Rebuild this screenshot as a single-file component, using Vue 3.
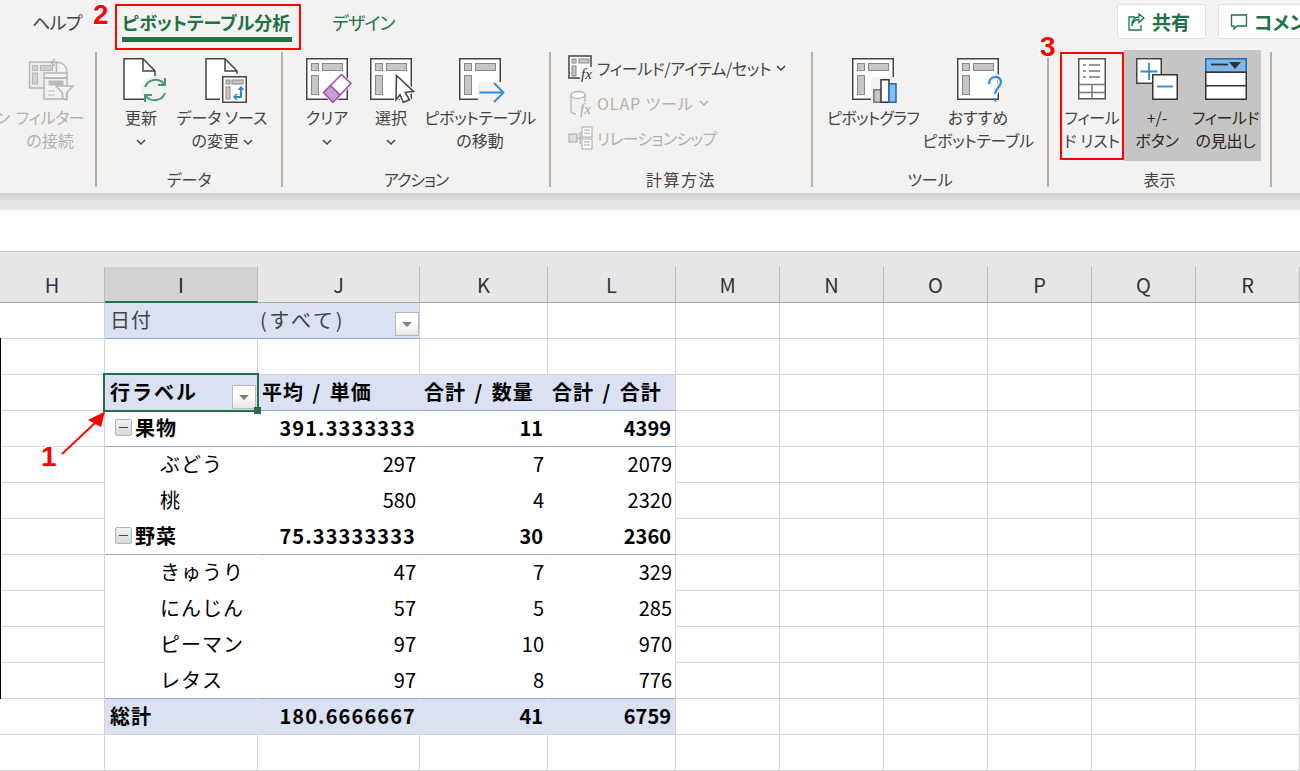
<script setup>
const cols = ['H', 'I', 'J', 'K', 'L', 'M', 'N', 'O', 'P', 'Q', 'R']
const blanks = [1, 2, 3, 4, 5, 6]
const rows = [
  { kind: 'page', a: '日付', b: '(すべて)', c: '', d: '' },
  { kind: 'blank', edge: true, a: '', b: '', c: '', d: '' },
  { kind: 'head', edge: true, a: '行ラベル', b: '平均 / 単価', c: '合計 / 数量', d: '合計 / 合計' },
  { kind: 'group', edge: true, a: '果物', b: '391.3333333', c: '11', d: '4399' },
  { kind: 'item', edge: true, a: 'ぶどう', b: '297', c: '7', d: '2079' },
  { kind: 'item', edge: true, a: '桃', b: '580', c: '4', d: '2320' },
  { kind: 'group', edge: true, a: '野菜', b: '75.33333333', c: '30', d: '2360' },
  { kind: 'item', edge: true, a: 'きゅうり', b: '47', c: '7', d: '329' },
  { kind: 'item', edge: true, a: 'にんじん', b: '57', c: '5', d: '285' },
  { kind: 'item', edge: true, a: 'ピーマン', b: '97', c: '10', d: '970' },
  { kind: 'item last', edge: true, a: 'レタス', b: '97', c: '8', d: '776' },
  { kind: 'total', a: '総計', b: '180.6666667', c: '41', d: '6759' },
  { kind: 'blank', a: '', b: '', c: '', d: '' }
]
</script>

<template>
  <div class="page">
    <svg class="defs" width="0" height="0">
      <symbol id="pv" viewBox="0 0 42 42" overflow="visible">
        <rect x=".75" y=".75" width="40.5" height="40.5" fill="#fff" stroke="#444" stroke-width="1.5" />
        <g fill="#c8c6c4" stroke="#8a8886">
          <rect x="5.5" y="5.5" width="7" height="7" />
          <rect x="16.5" y="5.5" width="20" height="7" />
          <rect x="5.5" y="17.5" width="7" height="19" />
        </g>
      </symbol>
    </svg>

    <header class="ribbon">
      <div class="tabs">
        <span class="tab help">ヘルプ</span>
        <span class="tab active">ピボットテーブル分析<i class="redbox tabbox"></i></span>
        <span class="tab design">デザイン</span>
        <div class="spacer"></div>
        <button class="btn share">
          <svg width="18" height="18" viewBox="0 0 18 18" fill="none" stroke="#217346" stroke-width="1.3">
            <path d="M8 4H2v13h12v-5" />
            <path d="M5 13c.5-4 3-6.500 7-6.500V9.500L17 5 12 1v3C7 4 4.500 8 5 13z" />
          </svg>
          共有
        </button>
        <button class="btn comment">
          <svg width="18" height="18" viewBox="0 0 18 18" fill="none" stroke="#217346" stroke-width="1.300">
            <path d="M1.500 2h15v11H7l-3 3v-3H1.500z" />
          </svg>
          コメント
        </button>
      </div>

      <div class="groups">
        <section class="group g1">
          <div class="items">
            <div class="cut off">ン</div>
            <div class="item off w80">
              <svg class="ico" viewBox="-2 -1 46 46" fill="none" stroke="#b9b7b5">
                <rect x=".5" y="4" width="27" height="26" fill="#ecebe9" stroke-width="1.500" />
                <rect x="3.500" y="7.500" width="5" height="5" fill="#d2d0ce" />
                <rect x="3.500" y="15" width="5" height="11" fill="#d2d0ce" />
                <rect x="11.500" y="7.500" width="12" height="5" fill="#d2d0ce" />
                <path d="M26 1l-4 3.500L26 8" stroke-width="1.500" />
                <path d="M22 4.500h7a9 9 0 0 1 9 9v3" stroke-width="1.300" />
                <rect x="15" y="15" width="23" height="26" fill="#f3f2f1" stroke-width="1.500" />
                <path d="M15 20h23" stroke-width="2" />
                <rect x="20" y="23" width="14" height="4" fill="#bbb" />
                <path d="M19 33h7M19 37h7" />
                <path d="M27 28h17l-6.500 7v7l-4-2v-5z" fill="#f3f2f1" stroke-width="1.500" />
              </svg>
              <div class="lbl tight">フィルター</div>
              <div class="lbl">の接続</div>
            </div>
          </div>
          <div class="glabel"></div>
        </section>

        <section class="group g2">
          <div class="items">
            <div class="item w60">
              <svg class="ico" viewBox="-2 -1 46 46" fill="none">
                <path d="M4 .75h19L35 13v28.250H4z" fill="#fff" stroke="#444" stroke-width="1.500" />
                <path d="M23 .75V13h12" stroke="#444" stroke-width="1.500" />
                <circle cx="35" cy="32" r="14" fill="#f3f2f1" />
                <path d="M25 29a11 11 0 0 1 19-3M45 35a11 11 0 0 1-19 3" stroke="#3f9c6b" stroke-width="2" />
                <path d="M45 20v7h-7M25 44v-7h7" stroke="#3f9c6b" stroke-width="2" />
              </svg>
              <div class="lbl">更新</div>
              <div class="lbl"><svg class="chev" viewBox="0 0 10 6"><path d="M1 1l4 4 4-4" /></svg></div>
            </div>
            <div class="item w102">
              <svg class="ico" viewBox="-2 -1 46 46" fill="none">
                <path d="M5 .75h19L36 13v28.250H5z" fill="#fff" stroke="#444" stroke-width="1.500" />
                <path d="M24 .75V13h12" stroke="#444" stroke-width="1.500" />
                <rect x="19" y="16" width="28" height="30" fill="#f3f2f1" />
                <rect x="21.750" y="18.750" width="23.500" height="25.500" fill="#fff" stroke="#444" stroke-width="1.500" />
                <g fill="#c8c6c4" stroke="#8a8886">
                  <rect x="25" y="22" width="4" height="4" />
                  <rect x="31" y="22" width="11" height="4" />
                  <rect x="25" y="29" width="4" height="12" />
                </g>
                <path d="M40 29v10h-7" stroke="#2e8bd8" stroke-width="2" />
                <path d="M37.500 32l2.500-3 2.500 3M36 36l-3 3 3 3" stroke="#2e8bd8" stroke-width="1.500" />
              </svg>
              <div class="lbl">データ ソース</div>
              <div class="lbl">の変更 <svg class="chev" viewBox="0 0 10 6"><path d="M1 1l4 4 4-4" /></svg></div>
            </div>
          </div>
          <div class="glabel">データ</div>
        </section>

        <section class="group g3">
          <div class="items">
            <div class="item w64">
              <svg class="ico" viewBox="-2 -1 46 46" fill="none">
                <use href="#pv" x="0" y="0" width="42" height="42" />
                <path d="M35.500 16.500L45 25.500 27 44.500 17.500 34.500z" fill="#f3f2f1" stroke="#f3f2f1" stroke-width="3" />
                <path d="M35.500 16.500L45 25.500 34 37 24.500 27.500z" fill="#fff" />
                <path d="M24.500 27.500L34 37 27 44.500 17.500 34.500z" fill="#c99fd2" />
                <path d="M35.500 16.500L45 25.500 27 44.500 17.500 34.500zM24.500 27.500L34 37" stroke="#a349a4" stroke-width="1.500" />
              </svg>
              <div class="lbl">クリア</div>
              <div class="lbl"><svg class="chev" viewBox="0 0 10 6"><path d="M1 1l4 4 4-4" /></svg></div>
            </div>
            <div class="item w64">
              <svg class="ico" viewBox="-2 -1 46 46" fill="none">
                <use href="#pv" x="0" y="0" width="42" height="42" />
                <path d="M26.500 17.500L43.500 33.500 35.200 34.300 39.500 41.800 33.300 44.300 30 36.700 26 41.700z" fill="#fff" stroke="#f3f2f1" stroke-width="4" />
                <path d="M26.500 17.500L43.500 33.500 35.200 34.300 39.500 41.800 33.300 44.300 30 36.700 26 41.700z" fill="#fff" stroke="#444" stroke-width="1.500" />
              </svg>
              <div class="lbl">選択</div>
              <div class="lbl"><svg class="chev" viewBox="0 0 10 6"><path d="M1 1l4 4 4-4" /></svg></div>
            </div>
            <div class="item w114">
              <svg class="ico" viewBox="-2 -1 46 46" fill="none">
                <use href="#pv" x="0" y="0" width="42" height="42" />
                <rect x="19" y="24" width="27" height="21" fill="#f3f2f1" />
                <path d="M20.500 34.500H44.500M35 25l9.500 9.500L35 44" stroke="#2e8bd8" stroke-width="1.800" />
              </svg>
              <div class="lbl tight">ピボットテーブル</div>
              <div class="lbl">の移動</div>
            </div>
          </div>
          <div class="glabel action">アクション</div>
        </section>

        <section class="group g4">
          <div class="items list">
            <div class="line">
              <svg class="sm" viewBox="0 0 26 26" fill="none">
                <rect x="1" y="1" width="22" height="22" fill="#fff" stroke="#444" stroke-width="1.500" />
                <g fill="#c8c6c4" stroke="#8a8886">
                  <rect x="4" y="4" width="4" height="4" />
                  <rect x="11" y="4" width="10" height="4" />
                  <rect x="4" y="11" width="4" height="10" />
                </g>
                <rect x="12" y="12" width="14" height="14" fill="#f3f2f1" />
                <text x="13" y="24" class="fx">fx</text>
              </svg>
              <span class="tight">フィールド/アイテム/セット</span>
              <svg class="chev rowchev" viewBox="0 0 10 6"><path d="M1 1l4 4 4-4" /></svg>
            </div>
            <div class="line off">
              <svg class="sm" viewBox="0 0 26 26" fill="none" stroke="#b9b7b5" stroke-width="1.300">
                <ellipse cx="10" cy="5" rx="7" ry="3.500" fill="#fff" />
                <path d="M3 5v16c0 1.500 3 3 5 3M17 5v7" />
                <text x="12" y="24" class="fx dim" stroke="none">fx</text>
              </svg>
              <span class="wide">OLAP ツール</span>
              <svg class="chev rowchev dimchev" viewBox="0 0 10 6"><path d="M1 1l4 4 4-4" /></svg>
            </div>
            <div class="line off">
              <svg class="sm" viewBox="0 0 26 26" fill="none" stroke="#a8a6a4">
                <rect x="1" y="9" width="8" height="8" fill="#e1dfdd" />
                <rect x="14" y="2" width="10" height="10" fill="#fff" />
                <rect x="14" y="14" width="10" height="10" fill="#fff" />
                <path d="M16 5h6M16 8h6M16 17h6M16 20h6M9 13h5M12 7v12" />
              </svg>
              <span class="vtight">リレーションシップ</span>
            </div>
          </div>
          <div class="glabel calc">計算方法</div>
        </section>

        <section class="group g5">
          <div class="items">
            <div class="item w100">
              <svg class="ico" viewBox="-2 -1 46 46" fill="none">
                <use href="#pv" x="0" y="0" width="42" height="42" />
                <rect x="19" y="19" width="27" height="26" fill="#f3f2f1" />
                <rect x="21.750" y="31.750" width="8" height="12.500" fill="#c8c6c4" stroke="#777" stroke-width="1.500" />
                <rect x="29" y="21.750" width="8" height="22.500" fill="#fff" stroke="#333" stroke-width="1.500" />
                <rect x="37" y="25.750" width="7" height="18.500" fill="#83beec" stroke="#1f6bb5" stroke-width="1.500" />
              </svg>
              <div class="lbl vtight">ピボットグラフ</div>
            </div>
            <div class="item w110">
              <svg class="ico" viewBox="-2 -1 46 46" fill="none">
                <use href="#pv" x="0" y="0" width="42" height="42" />
                <path d="M32 26c0-9 12-9 12-2 0 5-6 6-6 12" stroke="#f3f2f1" stroke-width="6" />
                <path d="M32 26c0-9 12-9 12-2 0 5-6 6-6 12" stroke="#2e8bd8" stroke-width="2.200" />
                <rect x="36.800" y="40" width="2.600" height="3.500" fill="#2e8bd8" />
              </svg>
              <div class="lbl">おすすめ</div>
              <div class="lbl tight">ピボットテーブル</div>
            </div>
          </div>
          <div class="glabel">ツール</div>
        </section>

        <section class="group g6">
          <div class="items">
            <div class="item w64 boxed">
              <i class="redbox listbox"></i>
              <svg class="ico" viewBox="-2 -1 46 46" fill="none">
                <rect x="7.750" y=".75" width="26.500" height="40" fill="#fff" stroke="#555" stroke-width="1.500" />
                <path d="M12 7h3M18 7h11M12 13h3M18 13h11M12 19h3M18 19h11" stroke="#777" stroke-width="1.300" />
                <path d="M8 26.500h26M8 34.500h26M21 26.500v14" stroke="#777" stroke-width="1.500" />
              </svg>
              <div class="lbl tight">フィール</div>
              <div class="lbl">ド リスト</div>
            </div>
            <div class="hl">
              <div class="item w66">
                <svg class="ico" viewBox="-2 -1 46 46" fill="none">
                  <rect x=".75" y=".75" width="24.500" height="24.500" fill="#fff" stroke="#444" stroke-width="1.500" />
                  <path d="M13 5v17M4.500 13.500h17" stroke="#2e8bd8" stroke-width="1.800" />
                  <rect x="16.750" y="16.750" width="24.500" height="24.500" fill="#fff" stroke="#333" stroke-width="1.500" />
                  <path d="M21 28.500h16" stroke="#2e8bd8" stroke-width="1.800" />
                </svg>
                <div class="lbl dark">+/-</div>
                <div class="lbl dark">ボタン</div>
              </div>
              <div class="item w71">
                <svg class="ico" viewBox="-2 -1 46 46" fill="none">
                  <rect x=".75" y=".75" width="40.500" height="13.500" fill="#7db8e8" stroke="#1f6bb5" stroke-width="1.500" />
                  <path d="M6 6.500h17" stroke="#333" stroke-width="1.800" />
                  <path d="M24 4h12l-6 7z" fill="#333" />
                  <rect x=".75" y="14.250" width="40.500" height="13.500" fill="#fff" stroke="#333" stroke-width="1.500" />
                  <rect x=".75" y="27.750" width="40.500" height="13.500" fill="#fff" stroke="#333" stroke-width="1.500" />
                </svg>
                <div class="lbl dark tight">フィールド</div>
                <div class="lbl dark tight">の見出し</div>
              </div>
            </div>
          </div>
          <div class="glabel">表示</div>
        </section>
      </div>
    </header>

    <div class="shade"></div>
    <div class="band"></div>
    <div class="formula"></div>
    <div class="topband"></div>

    <main class="sheet">
      <div v-for="(c, i) in cols" :key="c" class="colhead" :class="{ selcol: i === 1 }">{{ c }}</div>
      <template v-for="(r, ri) in rows" :key="ri">
        <div class="row" :class="r.kind">
          <div class="cell h" :class="{ edge: r.edge }"></div>
          <div class="cell i">
            <i v-if="r.kind === 'group'" class="minus"></i>
            <span class="ja">{{ r.a }}</span>
            <template v-if="r.kind === 'head'">
              <span class="drop"><b></b></span>
              <i class="selbox"></i>
              <i class="handle"></i>
            </template>
          </div>
          <div class="cell j">
            <span>{{ r.b }}</span>
            <span v-if="r.kind === 'page'" class="drop pagedrop"><b></b></span>
          </div>
          <div class="cell k"><span>{{ r.c }}</span></div>
          <div class="cell l"><span>{{ r.d }}</span></div>
          <div v-for="b in blanks" :key="b" class="cell x"></div>
        </div>
      </template>
    </main>

    <span class="num n1">1</span>
    <span class="num n2">2</span>
    <span class="num n3">3</span>
    <svg class="arrow" width="60" height="60" viewBox="0 0 60 60" fill="none">
      <path d="M2 46L36 14" stroke="#f00" stroke-width="1.800" />
      <path d="M45 3.500L28 12 41 19z" fill="#f00" />
    </svg>
  </div>
</template>

<style>
html, body { margin: 0; background: #fff; }
</style>

<style scoped>
.page {
  position: relative;
  width: 1300px;
  height: 771px;
  overflow: hidden;
  background: #fff;
  font-family: "Noto Sans CJK JP", "Noto Sans", sans-serif;
  font-feature-settings: "palt";
  color: #444;
}
.defs { position: absolute; }

.ribbon { height: 193px; background: #f3f2f1; overflow: hidden; position: relative; }
.tabs { height: 50px; display: flex; align-items: flex-start; padding-left: 32px; box-sizing: border-box; }
.tab { position: relative; font-size: 18px; line-height: 26px; padding-top: 9px; white-space: nowrap; }
.help { width: 90px; color: #444; letter-spacing: -.6px; }
.active { width: 170px; font-weight: 700; color: #217346; height: 28px; border-bottom: 5px solid #217346; box-sizing: content-box; }
.design { margin-left: 40px; color: #217346; letter-spacing: -.8px; }
.spacer { flex: 1; }
.btn {
  flex-shrink: 0;
  height: 35px;
  margin-top: 4px;
  background: #fff;
  border: 1px solid #e1dfdd;
  border-radius: 3px;
  box-sizing: border-box;
  display: flex;
  align-items: center;
  gap: 7px;
  font: 700 19px "Noto Sans CJK JP", sans-serif;
  font-feature-settings: "palt";
  color: #217346;
  white-space: nowrap;
  overflow: hidden;
}
.share { width: 89px; padding: 0 0 0 9px; margin-right: 12px; }
.comment { width: 120px; padding: 0 0 0 11px; margin-right: -38px; }
.comment svg { margin-right: -1px; }
.redbox { position: absolute; border: 2px solid #f00; box-sizing: border-box; }
.tabbox { left: -7px; right: -9px; top: 4px; height: 46px; }

.groups { display: flex; height: 143px; }
.group {
  box-sizing: border-box;
  height: 135px;
  margin-top: 2px;
  border-right: 2px solid #b3b0ad;
  flex-shrink: 0;
}
.items { display: flex; height: 111px; margin-top: -2px; box-sizing: border-box; }
.glabel { font-size: 16px; line-height: 18px; padding-top: 9px; text-align: center; color: #444; }
.glabel.action { letter-spacing: -1px; }
.glabel.calc { letter-spacing: 1.500px; }
.g1 { width: 97px; }
.g2 { width: 186px; }
.g2 .items { padding-left: 14px; }
.g3 { width: 268px; }
.g3 .items { padding-left: 12px; }
.g4 { width: 262px; }
.g4 .items { padding-left: 17px; }
.g5 { width: 236px; }
.g5 .items { padding-left: 10px; }
.g6 { width: 223px; }
.g6 .items { padding-left: 11px; }
.cut { width: 10px; margin-top: 56px; font-size: 16px; line-height: 23px; overflow: hidden; direction: rtl; }
.item {
  position: relative;
  box-sizing: border-box;
  padding-top: 7px;
  display: flex;
  flex-direction: column;
  align-items: center;
  flex-shrink: 0;
}
.w60 { width: 60px; }
.w64 { width: 64px; }
.w66 { width: 66px; }
.w71 { width: 71px; }
.w80 { width: 80px; }
.w100 { width: 100px; }
.w102 { width: 102px; }
.w110 { width: 110px; }
.w114 { width: 114px; }
.ico { width: 46px; height: 46px; overflow: visible; margin-bottom: 3px; flex-shrink: 0; }
.lbl { font-size: 16px; line-height: 23px; white-space: nowrap; color: #444; }
.lbl.dark { color: #2f2725; }
.tight { letter-spacing: -.3px; }
.vtight { letter-spacing: -.7px; }
.wide { letter-spacing: .9px; }
.off, .off .lbl { color: #b3b0ad; }
.chev { width: 10px; height: 6px; fill: none; stroke: #444; stroke-width: 1.500; overflow: visible; vertical-align: 2px; }
.hl { display: flex; background: #c6c5c3; height: 111px; }
.listbox { left: 0; right: 0; top: 2px; bottom: 1px; }

.list { flex-direction: column; display: flex; }
.line { height: 35px; display: flex; align-items: center; font-size: 16px; white-space: nowrap; }
.sm { width: 26px; height: 26px; margin-right: 3px; flex-shrink: 0; overflow: visible; }
.fx { font: italic 15px "Liberation Serif", serif; fill: #333; }
.fx.dim { fill: #a8a6a4; }
.rowchev { margin-left: 5px; vertical-align: 0; }
.dimchev { stroke: #b3b0ad; }

.shade { height: 7px; background: linear-gradient(#d0cfcd, #dcdbd9); }
.band { height: 10px; background: #e6e6e6; }
.formula { height: 41px; background: #fff; border-bottom: 1px solid #c8c8c8; }
.topband { height: 15px; background: #e6e6e6; }

.sheet {
  display: grid;
  grid-template-columns: 105px 153px 162px 128px 128px repeat(6, 104px);
  grid-auto-rows: 36px;
  color: #000;
  font-feature-settings: normal;
}
.colhead {
  height: 36px;
  box-sizing: border-box;
  background: #e6e6e6;
  border-right: 1px solid #b8b8b8;
  border-bottom: 1px solid #a6a6a6;
  color: #333;
  display: flex;
  align-items: center;
  justify-content: center;
  font-size: 20px;
  font-weight: 400;
}
.colhead.selcol { background: #d2d2d2; border-bottom: 2px solid #217346; color: #222; }

.row { display: contents; }
.cell {
  position: relative;
  box-sizing: border-box;
  border-right: 1px solid #d4d4d4;
  border-bottom: 1px solid #d4d4d4;
  padding-bottom: 2px;
  display: flex;
  align-items: center;
  font-size: 20px;
  white-space: nowrap;
}
.edge::before { content: ""; position: absolute; left: 0; top: -1px; bottom: -1px; width: 1px; background: #000; }
.i { padding-left: 5px; letter-spacing: 1px; }
.j, .k, .l { padding-right: 3px; justify-content: flex-end; }

.row.page .i, .row.page .j { background: #d9e1f2; border-bottom-color: #8ea9db; border-right-color: #d9e1f2; }
.row.page .j { border-right-color: #d4d4d4; justify-content: flex-start; padding-left: 2px; letter-spacing: 3.600px; }
.row.head .i, .row.head .j, .row.head .k, .row.head .l,
.row.total .i, .row.total .j, .row.total .k, .row.total .l {
  background: #d9e1f2;
  font-weight: 700;
  border-right-color: #d9e1f2;
}
.row.head .i { letter-spacing: 2px; }
.row.head .i, .row.head .j, .row.head .k, .row.head .l { border-bottom-color: #8ea9db; }
.row.head .j, .row.head .k, .row.head .l { justify-content: flex-start; padding-left: 4px; letter-spacing: 1px; word-spacing: 3px; }
.row.total .i, .row.total .j, .row.total .k, .row.total .l { border-bottom-color: #d4d4d4; }
.row.head .l, .row.total .l { border-right-color: #d4d4d4; }
.row.group .i, .row.group .j, .row.group .k, .row.group .l {
  font-weight: 700;
  border-right-color: #fff;
  border-bottom-color: #8ea9db;
}
.row.group .l, .row.item .l { border-right-color: #d4d4d4; }
.row.group .i { padding-left: 10px; gap: 3px; }
.row.item .i, .row.item .j, .row.item .k { border-right-color: #fff; }
.row.item .i, .row.item .j, .row.item .k, .row.item .l { border-bottom-color: #fff; }
.row.item.last .i, .row.item.last .j, .row.item.last .k, .row.item.last .l { border-bottom-color: #8ea9db; }
.row.item .i { padding-left: 55px; }
.row.group .j, .row.total .j { letter-spacing: 1.100px; }
.row.group .k, .row.group .l, .row.total .k, .row.total .l { padding-right: 4px; }
.row.head .i { z-index: 2; }

.minus {
  width: 17px;
  height: 17px;
  box-sizing: border-box;
  border: 1px solid #a9b6cf;
  border-radius: 2px;
  background: linear-gradient(#f1f1f1, #d8d8d8);
  position: relative;
  flex-shrink: 0;
}
.minus::after { content: ""; position: absolute; left: 3px; right: 3px; top: 7px; height: 1px; background: #444; }
.drop {
  position: absolute;
  right: 1px;
  top: 10px;
  width: 24px;
  height: 24px;
  box-sizing: border-box;
  border: 1px solid #b8b8b8;
  background: linear-gradient(#fff 45%, #e6e6e6);
  display: flex;
  align-items: center;
  justify-content: center;
}
.drop b { width: 0; height: 0; border: 5px solid transparent; border-top: 5px solid #7f7f7f; border-bottom: 0; }
.pagedrop { right: 0; top: 9px; }
.selbox { position: absolute; left: -2px; right: -2px; top: -2px; bottom: -2px; border: 2px solid #217346; pointer-events: none; }
.handle { position: absolute; right: -4px; bottom: -4px; width: 7px; height: 7px; background: #217346; }

.num {
  position: absolute;
  font: 700 28px/28px "Liberation Sans", sans-serif;
  color: #f00;
  -webkit-text-stroke: 3px #fff;
  paint-order: stroke fill;
}
.n1 { left: 41px; top: 443px; }
.n2 { left: 93px; top: 1px; }
.n3 { left: 1040px; top: 33px; }
.arrow { position: absolute; left: 60px; top: 408px; }
</style>
